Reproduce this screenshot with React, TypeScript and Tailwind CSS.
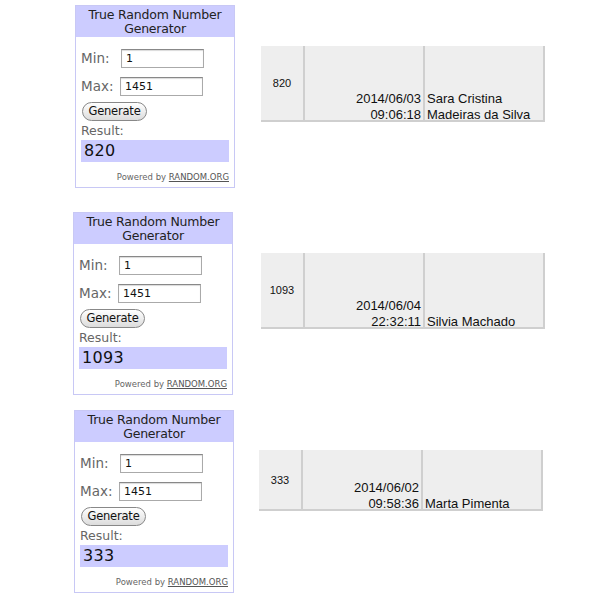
import React from "react";

type Row = {
  n: string;
  date: string;
  time: string;
  name: string[];
  wx: number;
  tableH: number;
};

function Widget({ result }: { result: string }) {
  return (
    <div className="w-[160px] h-[183px] border border-[#c8c8f5] bg-white flex flex-col [font-family:'DejaVu_Sans',Verdana,sans-serif]">
      <div className="h-[31px] bg-[#ccccff] text-[12.5px] leading-[14px] text-[#222] text-center pt-[2px] tracking-[-0.2px]">
        True Random Number
        <br />
        Generator
      </div>
      <div className="flex flex-col px-[5px]">
        <div className="flex items-center mt-[12px] h-[19px]">
          <span className="w-[40px] text-[13.5px] text-[#666]">Min:</span>
          <div className="w-[83px] h-[19px] border border-[#aaa] border-t-[#888] shadow-[inset_0_1px_1px_rgba(0,0,0,0.15)] text-[11px] leading-[17px] pl-[4px] text-[#111]">
            1
          </div>
        </div>
        <div className="flex items-center mt-[9px] h-[19px]">
          <span className="w-[39px] text-[13.5px] text-[#666]">Max:</span>
          <div className="w-[83px] h-[19px] border border-[#aaa] border-t-[#888] shadow-[inset_0_1px_1px_rgba(0,0,0,0.15)] text-[11px] leading-[17px] pl-[4px] text-[#111]">
            1451
          </div>
        </div>
        <div className="mt-[6px] h-[19px] w-[65px] ml-[1px] rounded-full border border-[#888] bg-gradient-to-b from-white to-[#dcdcdc] text-[11.5px] leading-[17px] text-center text-[#111] tracking-[-0.2px]">
          Generate
        </div>
        <div className="mt-[2px] text-[12.5px] leading-[15px] text-[#666]">Result:</div>
        <div className="mt-[2px] h-[22px] w-[148px] bg-[#ccccff] text-[16px] leading-[22px] pl-[3px] text-[#111] tracking-[0.3px]">
          {result}
        </div>
        <div className="mt-[9px] text-[8.5px] leading-[12px] text-[#666] text-right">
          Powered by <span className="underline text-[#555]">RANDOM.ORG</span>
        </div>
      </div>
    </div>
  );
}

function Table({ r }: { r: Row }) {
  return (
    <div
      className="flex w-[284px] bg-[#eeeeee] border-b-2 border-r-2 border-[#cfcfcf] [font-family:'Liberation_Sans',Arial,sans-serif] text-[#111]"
      style={{ height: r.tableH }}
    >
      <div className="w-[44px] border-r-2 border-[#cfcfcf] flex items-center justify-center text-[11px] pt-[1px]">
        {r.n}
      </div>
      <div className="w-[120px] border-r-2 border-[#cfcfcf] flex flex-col justify-end items-end text-[13px] leading-[16px] pr-[2px]">
        <div className="relative top-[3px] flex flex-col items-end">
          <span>{r.date}</span>
          <span>{r.time}</span>
        </div>
      </div>
      <div className="flex-1 flex flex-col justify-end text-[13px] leading-[16px] pl-[2px]">
        <div className="relative top-[3px] flex flex-col">
          {r.name.map((s) => (
            <span key={s}>{s}</span>
          ))}
        </div>
      </div>
    </div>
  );
}

export default function App() {
  const rows: (Row & { mt: number; tx: number; ty: number })[] = [
    { n: "820", date: "2014/06/03", time: "09:06:18", name: ["Sara Cristina", "Madeiras da Silva"], wx: 75, tableH: 76, mt: 5, tx: 261, ty: 41 },
    { n: "1093", date: "2014/06/04", time: "22:32:11", name: ["Silvia Machado"], wx: 73, tableH: 76, mt: 24, tx: 261, ty: 41 },
    { n: "333", date: "2014/06/02", time: "09:58:36", name: ["Marta Pimenta"], wx: 74, tableH: 61, mt: 15, tx: 259, ty: 40 },
  ];
  return (
    <div className="w-[600px] h-[600px] bg-white overflow-hidden">
      {rows.map((r) => (
        <div key={r.n} className="flex items-start" style={{ marginTop: r.mt, paddingLeft: r.wx }}>
          <Widget result={r.n} />
          <div style={{ marginLeft: r.tx - r.wx - 160, marginTop: r.ty }}>
            <Table r={r} />
          </div>
        </div>
      ))}
    </div>
  );
}
